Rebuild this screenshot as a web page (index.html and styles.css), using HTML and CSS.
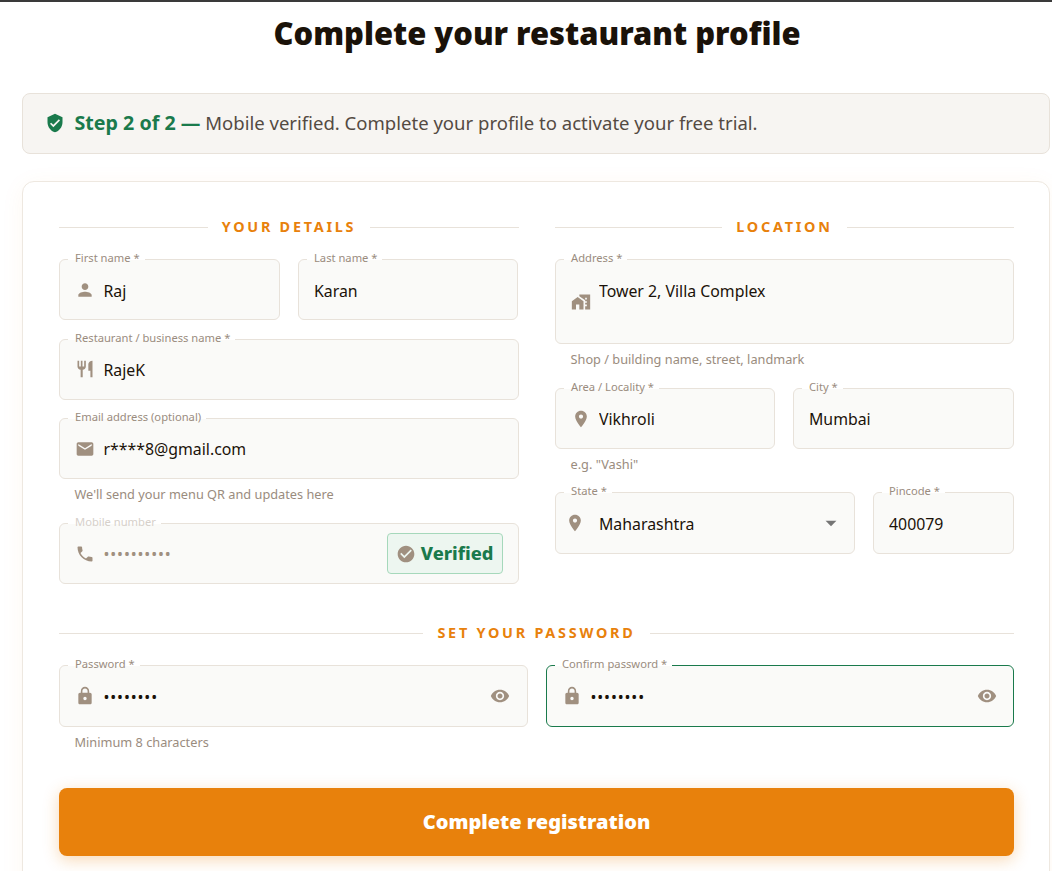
FILE: index.html
```html
<!DOCTYPE html>
<html lang="en">
<head>
<meta charset="utf-8">
<title>Complete your restaurant profile</title>
<link rel="stylesheet" href="styles.css">
</head>
<body>
<div class="topbar"></div>
<main class="page">
  <h1 class="title">Complete your restaurant profile</h1>
  <div class="banner">
    <svg class="banner-ic" viewBox="0 0 24 24"><path d="M12 1L3 5v6c0 5.55 3.84 10.74 9 12 5.16-1.26 9-6.45 9-12V5l-9-4zm-2 16l-4-4 1.41-1.41L10 14.17l6.59-6.59L18 9l-8 8z"/></svg>
    <p class="banner-text"><strong>Step 2 of 2 —</strong> Mobile verified. Complete your profile to activate your free trial.</p>
  </div>
  <form class="card">
    <div class="columns">
      <section class="col">
        <h2 class="sec"><span>YOUR DETAILS</span></h2>
        <div class="row row-names">
          <div class="field"><label class="lab">First name *</label>
            <svg class="ic" viewBox="0 0 24 24"><path d="M12 12c2.21 0 4-1.79 4-4s-1.79-4-4-4-4 1.79-4 4 1.79 4 4 4zm0 2c-2.67 0-8 1.34-8 4v2h16v-2c0-2.66-5.33-4-8-4z"/></svg>
            <input class="inp" value="Raj"></div>
          <div class="field"><label class="lab">Last name *</label><input class="inp" value="Karan"></div>
        </div>
        <div class="field"><label class="lab">Restaurant / business name *</label>
          <svg class="ic" viewBox="0 0 24 24"><path d="M11 9H9V2H7v7H5V2H3v7c0 2.12 1.66 3.84 3.75 3.97V22h2.5v-9.03C11.34 12.84 13 11.12 13 9V2h-2v7zm5-3v8h2.5v8H21V2c-2.76 0-5 2.24-5 4z"/></svg>
          <input class="inp" value="RajeK"></div>
        <div class="field"><label class="lab">Email address (optional)</label>
          <svg class="ic" viewBox="0 0 24 24"><path d="M20 4H4c-1.1 0-1.99.9-1.99 2L2 18c0 1.1.9 2 2 2h16c1.1 0 2-.9 2-2V6c0-1.1-.9-2-2-2zm0 4l-8 5-8-5V6l8 5 8-5v2z"/></svg>
          <input class="inp" value="r****8@gmail.com"></div>
        <p class="hint">We'll send your menu QR and updates here</p>
        <div class="field"><label class="lab lab-off">Mobile number</label>
          <svg class="ic" viewBox="0 0 24 24"><path d="M6.62 10.79c1.44 2.83 3.76 5.14 6.59 6.59l2.2-2.2c.27-.27.67-.36 1.02-.24 1.12.37 2.33.57 3.57.57.55 0 1 .45 1 1V20c0 .55-.45 1-1 1-9.39 0-17-7.61-17-17 0-.55.45-1 1-1h3.5c.55 0 1 .45 1 1 0 1.25.2 2.45.57 3.57.11.35.03.74-.25 1.02l-2.2 2.2z"/></svg>
          <input class="inp inp-off" type="password" value="9876543210" disabled>
          <span class="badge">
            <svg class="ic" viewBox="0 0 24 24"><path d="M12 2C6.48 2 2 6.48 2 12s4.48 10 10 10 10-4.48 10-10S17.52 2 12 2zm-2 15l-5-5 1.41-1.41L10 14.17l7.59-7.59L19 8l-9 9z"/></svg>
            Verified</span>
        </div>
      </section>
      <section class="col col-right">
        <h2 class="sec"><span>LOCATION</span></h2>
        <div class="field field-address"><label class="lab">Address *</label>
          <svg class="ic" viewBox="0 0 24 24"><path d="M1 11v10h5v-6h4v6h5V11L8 6z"/><path d="M10 3v1.97l7 5V11h2v2h-2v2h2v2h-2v4h6V3H10zm9 6h-2V7h2v2z"/></svg>
          <textarea class="inp area" rows="2">Tower 2, Villa Complex</textarea></div>
        <p class="hint">Shop / building name, street, landmark</p>
        <div class="row row-area">
          <div class="field"><label class="lab">Area / Locality *</label>
            <svg class="ic" viewBox="0 0 24 24"><path d="M12 2C8.13 2 5 5.13 5 9c0 5.25 7 13 7 13s7-7.75 7-13c0-3.87-3.13-7-7-7zm0 9.5c-1.38 0-2.5-1.12-2.5-2.5s1.12-2.5 2.5-2.5 2.5 1.12 2.5 2.5-1.12 2.5-2.5 2.5z"/></svg>
            <input class="inp" value="Vikhroli"></div>
          <div class="field"><label class="lab">City *</label><input class="inp inp-city" value="Mumbai"></div>
        </div>
        <p class="hint hint-tight">e.g. "Vashi"</p>
        <div class="row row-state">
          <div class="field field-state"><label class="lab">State *</label>
            <svg class="ic" viewBox="0 0 24 24"><path d="M12 2C8.13 2 5 5.13 5 9c0 5.25 7 13 7 13s7-7.75 7-13c0-3.87-3.13-7-7-7zm0 9.5c-1.38 0-2.5-1.12-2.5-2.5s1.12-2.5 2.5-2.5 2.5 1.12 2.5 2.5-1.12 2.5-2.5 2.5z"/></svg>
            <select class="inp sel"><option>Maharashtra</option></select>
            <svg class="caret" viewBox="0 0 24 24"><path d="M7 10l5 5 5-5z"/></svg></div>
          <div class="field"><label class="lab">Pincode *</label><input class="inp" value="400079"></div>
        </div>
      </section>
    </div>
    <section class="pw">
      <h2 class="sec"><span>SET YOUR PASSWORD</span></h2>
      <div class="row row-pw">
        <div>
          <div class="field field-pw"><label class="lab">Password *</label>
            <svg class="ic" viewBox="0 0 24 24"><path d="M18 8h-1V6c0-2.76-2.24-5-5-5S7 3.24 7 6v2H6c-1.1 0-2 .9-2 2v10c0 1.1.9 2 2 2h12c1.1 0 2-.9 2-2V10c0-1.1-.9-2-2-2zm-6 9c-1.1 0-2-.9-2-2s.9-2 2-2 2 .9 2 2-.9 2-2 2zm3.1-9H8.9V6c0-1.71 1.39-3.1 3.1-3.1 1.71 0 3.1 1.39 3.1 3.1v2z"/></svg>
            <input class="inp inp-pw" type="password" value="password">
            <svg class="ic eye" viewBox="0 0 24 24"><path d="M12 4.5C7 4.5 2.73 7.61 1 12c1.73 4.39 6 7.5 11 7.5s9.27-3.11 11-7.5c-1.73-4.39-6-7.5-11-7.5zM12 17c-2.76 0-5-2.24-5-5s2.24-5 5-5 5 2.24 5 5-2.24 5-5 5zm0-8c-1.66 0-3 1.34-3 3s1.34 3 3 3 3-1.34 3-3-1.34-3-3-3z"/></svg></div>
          <p class="hint hint-last">Minimum 8 characters</p>
        </div>
        <div class="field field-pw field-focus"><label class="lab">Confirm password *</label>
          <svg class="ic" viewBox="0 0 24 24"><path d="M18 8h-1V6c0-2.76-2.24-5-5-5S7 3.24 7 6v2H6c-1.1 0-2 .9-2 2v10c0 1.1.9 2 2 2h12c1.1 0 2-.9 2-2V10c0-1.1-.9-2-2-2zm-6 9c-1.1 0-2-.9-2-2s.9-2 2-2 2 .9 2 2-.9 2-2 2zm3.1-9H8.9V6c0-1.71 1.39-3.1 3.1-3.1 1.71 0 3.1 1.39 3.1 3.1v2z"/></svg>
          <input class="inp inp-pw" type="password" value="password">
          <svg class="ic eye eye-focus" viewBox="0 0 24 24"><path d="M12 4.5C7 4.5 2.73 7.61 1 12c1.73 4.39 6 7.5 11 7.5s9.27-3.11 11-7.5c-1.73-4.39-6-7.5-11-7.5zM12 17c-2.76 0-5-2.24-5-5s2.24-5 5-5 5 2.24 5 5-2.24 5-5 5zm0-8c-1.66 0-3 1.34-3 3s1.34 3 3 3 3-1.34 3-3-1.34-3-3-3z"/></svg></div>
      </div>
    </section>
    <button class="submit" type="button">Complete registration</button>
  </form>
</main>
</body>
</html>
```
FILE: styles.css
```css
* { box-sizing: border-box; }
html, body { margin: 0; height: 871px; overflow: hidden; background: #fff; }
body { font-family: "Noto Sans", sans-serif; color: #1a1209; }
.topbar { height: 2px; background: #3a3a3a; }
.page { padding: 0 2px 0 22px; }
.title { margin: 0; height: 91px; padding: 10px 0 0 2px; font-size: 30.9px; line-height: 42px; font-weight: 900; text-align: center; color: #1a1209; }
.banner { display: flex; align-items: center; gap: 9.5px; height: 61px; padding-left: 22px; background: #f7f5f2; border: 1px solid #e8e2da; border-radius: 8px; }
.banner-ic { flex: none; width: 20px; height: 20px; margin-bottom: 1px; fill: #1a7a4c; }
.banner-text { margin: 0 0 2px; font-size: 18.55px; color: #544a42; }
.banner-text strong { color: #1a7a4c; font-weight: 700; font-size: 19.65px; }
.card { margin-top: 27px; padding: 35px 35px 60px 36px; height: 760px; background: #fff; border: 1px solid #eee8e0; border-radius: 12px; box-shadow: 0 4px 24px rgba(232, 129, 12, .06); }
.columns { display: grid; grid-template-columns: 460px 459px; gap: 36px; }
.col { display: flex; flex-direction: column; gap: 18.5px; }
.sec { display: flex; align-items: center; gap: 14px; height: 20px; margin: 0 0 3.5px; font-size: 14.4px; line-height: 20px; font-weight: 700; letter-spacing: 2.75px; color: #e8810c; }
.sec::before, .sec::after { content: ""; flex: 1; height: 1px; background: #e8e2da; }
.row { display: grid; }
.row-names { grid-template-columns: 221px 220px; gap: 18px; }
.row-names .inp { margin-top: 3px; }
.row-area { grid-template-columns: 220px 221px; gap: 18px; }
.row-state { grid-template-columns: 300px 141px; gap: 18px; }
.row-state .field { height: 62px; }
.row-pw { grid-template-columns: 469px 468px; gap: 18px; }
.field { position: relative; display: flex; align-items: center; height: 61px; padding-left: 14.5px; background: #fafaf8; border: 1px solid #e8e2da; border-radius: 6px; }
.field-address { height: 85px; }
.row-state .field-state { padding-left: 9px; }
.field-pw { height: 62px; }
.field-focus { border-color: #1a7a4c; }
.lab { position: absolute; top: -10px; left: 8px; padding: 0 5px 0 7px; font-size: 11.2px; line-height: 16px; color: #9a8c7e; background: linear-gradient(#fff 60%, #fafaf8 60%); }
.lab-off { color: #d6d0ca; }
.ic { flex: none; width: 20px; height: 20px; fill: #a09080; }
.inp { flex: 1; min-width: 0; width: 100%; height: 24px; padding: 0; margin: 1px 0 0 9px; border: 0; outline: 0; background: transparent; font-family: inherit; font-size: 15.85px; line-height: 24px; color: #1a1209; }
.col-right .inp { margin-left: 8.5px; }
.field > .inp:first-of-type:nth-child(2) { margin-left: .5px; }
.field > .inp-city:nth-child(2) { margin-left: 1.5px; }
.inp-pw, .inp-off { letter-spacing: .85px; }
.inp-off { color: #a09080; }
.col-right .area { height: 62px; resize: none; align-self: flex-start; margin-top: 19px; }
.col-right .sel { appearance: none; margin-left: 14px; }
.caret { flex: none; width: 26px; height: 26px; margin-right: 10px; fill: #757575; }
.eye { margin-right: 17px; }
.eye-focus { margin-right: 16px; }
.hint { margin: -12px 0 0 15.5px; height: 19px; font-size: 12.75px; line-height: 16px; color: #9a8c7e; }
.hint-tight { height: 18px; }
.hint-last { margin-top: 7px; }
.badge { display: flex; align-items: center; gap: 4.5px; height: 41px; margin-right: 15px; padding: 0 8.5px 2px; background: #edf6f0; border: 1px solid #a6d8bb; border-radius: 4px; font-size: 18.3px; font-weight: 800; color: #1a7a4c; }
.badge .ic { margin-top: 2px; }
.pw { margin-top: 39px; }
.pw .sec { margin-bottom: 22px; }
.submit { display: block; width: 955px; height: 68px; margin-top: 35px; padding-bottom: 2px; border: 0; border-radius: 8px; background: #e8810c; color: #fff; font-family: inherit; font-size: 20px; font-weight: 900; box-shadow: 0 4px 16px rgba(232, 129, 12, .3); }
```
